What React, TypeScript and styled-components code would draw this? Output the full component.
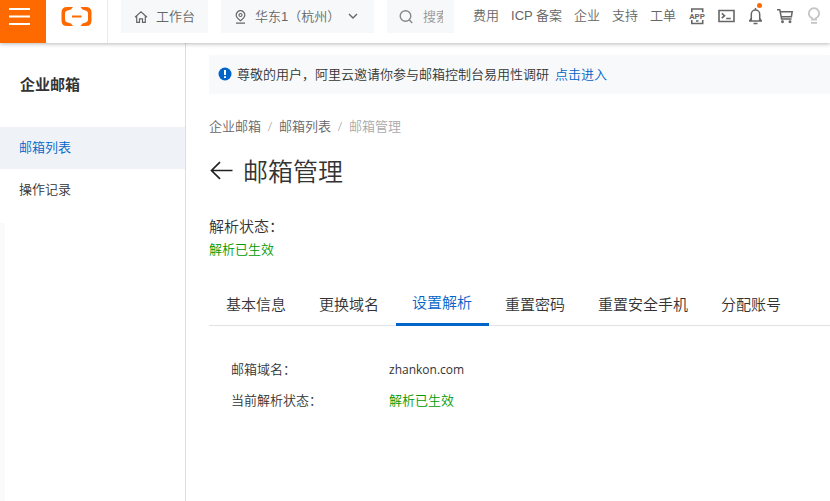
import React from "react";
import styled, { createGlobalStyle } from "styled-components";

const GlobalStyle = createGlobalStyle`
  * { box-sizing: border-box; }
  body {
    margin: 0;
    background: #fff;
    color: #333;
    font: 350 13px/20px "Open Sans", "Noto Sans CJK SC", sans-serif;
    overflow-x: hidden;
  }
  button, input { font: inherit; color: inherit; border: 0; background: none; padding: 0; }
  a { color: inherit; text-decoration: none; }
  h1, h2, p, ul, ol, dl, dd { margin: 0; padding: 0; list-style: none; }
`;

const Page = styled.div`
  display: flex;
  flex-direction: column;
  min-height: 100vh;
`;

const TopBar = styled.header`
  position: relative;
  z-index: 1;
  display: flex;
  height: 43px;
  background: #fff;
  box-shadow: 0 1px 4px rgba(0, 0, 0, 0.28);
  color: #666;
  font-family: "Liberation Sans", "Noto Sans CJK SC", sans-serif;
  white-space: nowrap;
`;

const MenuButton = styled.button`
  display: flex;
  justify-content: center;
  flex: none;
  width: 46px;
  padding: 7px 7px 0 0;
  background: #ff6a00;
`;

const LogoLink = styled.a`
  display: flex;
  justify-content: center;
  flex: none;
  width: 62px;
  padding-top: 6px;
  border-right: 1px solid #ebebeb;
`;

const Chip = styled.button<{ $width: number }>`
  display: flex;
  align-items: center;
  flex: none;
  gap: 8px;
  width: ${(p) => p.$width}px;
  height: 33px;
  margin-left: 13px;
  padding-left: 13px;
  background: #f7f8fa;
  svg { flex: none; }
`;

const Chevron = styled.span`
  display: flex;
`;

const SearchBox = styled.label`
  display: flex;
  align-items: center;
  flex: none;
  gap: 10px;
  width: 67px;
  height: 33px;
  margin-left: 13px;
  padding: 0 11px 0 12px;
  background: #f7f8fa;
  color: #888;
  svg { flex: none; }
`;

const SearchInput = styled.input`
  width: 100%;
  min-width: 0;
  outline: 0;
  &::placeholder { color: #999; opacity: 1; }
`;

const TopNav = styled.nav`
  display: flex;
  gap: 12px;
  height: 31px;
  align-items: center;
  margin-left: 19px;
`;

const Tools = styled.div`
  display: flex;
  align-items: center;
  gap: 12px;
  height: 31px;
  margin-left: 12px;
`;

const ToolButton = styled.button<{ $muted?: boolean }>`
  position: relative;
  display: flex;
  flex: none;
  color: ${(p) => (p.$muted ? "#c4c4c4" : "#666")};
`;

const Dot = styled.span`
  position: absolute;
  top: -4px;
  right: 2px;
  width: 5px;
  height: 5px;
  border-radius: 50%;
  background: #ff6a00;
`;

const Body = styled.div`
  display: flex;
  flex: 1;
`;

const Sidebar = styled.aside`
  flex: none;
  width: 186px;
  border-right: 1px solid #dedede;
  background: linear-gradient(#fafafa, #fafafa) 0 180px / 5px 100% no-repeat;
`;

const SidebarTitle = styled.h2`
  padding: 29px 20px 31px;
  font-size: 15px;
  line-height: 24px;
  font-weight: 700;
`;

const SideLink = styled.a<{ $active?: boolean }>`
  display: block;
  padding: 0 19px 2px;
  line-height: 40px;
  color: ${(p) => (p.$active ? "#0064c8" : "#333")};
  background: ${(p) => (p.$active ? "#eff3f8" : "transparent")};
`;

const Main = styled.main`
  flex: 1;
  min-width: 0;
  padding: 12px 0 24px 23px;
`;

const Notice = styled.div`
  display: flex;
  align-items: center;
  height: 39px;
  padding: 0 0 2px 9px;
  background: #f7f9fa;
  svg { margin-right: 5px; }
  a { margin-left: 6px; color: #0064c8; }
`;

const Crumbs = styled.ol`
  display: flex;
  margin-top: 22px;
  color: #666;
  li + li::before {
    content: "/";
    display: inline-block;
    width: 18px;
    text-align: center;
    color: #999;
  }
  li:last-child { color: #aaa; }
`;

const TitleRow = styled.div`
  display: flex;
  align-items: center;
  gap: 10px;
  margin-top: 17px;
`;

const BackButton = styled.button`
  display: flex;
  color: #222;
`;

const Title = styled.h1`
  font-size: 25px;
  line-height: 36px;
  font-weight: 350;
`;

const StatusLabel = styled.p`
  margin-top: 25px;
  font-size: 15px;
  line-height: 24px;
`;

const Success = styled.span`
  color: #009a00;
`;

const StatusValue = styled(Success)`
  display: block;
  margin-top: 1px;
`;

const TabList = styled.div`
  display: flex;
  margin-top: 24px;
  padding-left: 1px;
  border-bottom: 1px solid #dfe3e6;
`;

const Tab = styled.button<{ $active?: boolean }>`
  height: 43px;
  margin-bottom: -1px;
  padding: 0 17px 2px 16px;
  font-size: 15px;
  white-space: nowrap;
  color: ${(p) => (p.$active ? "#0064c8" : "#333")};
  border-bottom: ${(p) => (p.$active ? "3px solid #0064c8" : "0")};
`;

const Details = styled.dl`
  display: grid;
  grid-template-columns: 158px 1fr;
  row-gap: 11px;
  padding: 33px 22px 0;
`;

const Domain = styled.dd`
  font-size: 12px;
  line-height: 22px;
  height: 20px;
  font-weight: 400;
`;

const MenuIcon = () => (
  <svg width="21" height="19" viewBox="0 0 21 19" stroke="#fff" strokeWidth="2">
    <path d="M0 2h21M0 9.500h21M0 17h21" />
  </svg>
);

const CloudLogo = () => (
  <svg width="31" height="21" viewBox="0 0 31 21" fill="#ff6a00">
    <path d="M12 1H6Q.5 1 .5 6.500v8Q.5 20 6 20h6l-2-2.600-4.200-1.200Q4 15.600 4 13.800V7.200Q4 5.400 5.800 4.800L10 3.600z" />
    <path d="M19.500 1h5.500q5.500 0 5.500 5.500v8q0 5.500-5.500 5.500h-5.500l2-2.600 3.700-1.200q1.800-.6 1.800-2.400V7.200q0-1.800-1.800-2.400l-3.700-1.200z" />
    <path d="M11 9.500h9.500v2H11z" />
  </svg>
);

const stroke = { fill: "none", stroke: "currentColor", strokeWidth: 1.4 };

const HomeIcon = () => (
  <svg width="14" height="14" viewBox="0 0 14 14" {...stroke} strokeWidth={1.200}>
    <path d="M1 7.200 7 1.700l6 5.500M2.700 6v6.300h2.800V8.800h3v3.500h2.800V6" />
  </svg>
);

const PinIcon = () => (
  <svg width="13" height="14" viewBox="0 0 13 14" {...stroke} strokeWidth={1.200}>
    <path d="M6.500 10.800C3.500 8.500 2.200 7 2.200 5a4.300 4.300 0 0 1 8.600 0c0 2-1.300 3.500-4.300 5.800zM2 13.200h9" />
    <circle cx="6.500" cy="5" r="1.500" />
  </svg>
);

const ChevronIcon = () => (
  <svg width="10" height="7" viewBox="0 0 10 7" {...stroke}>
    <path d="m1 1 4 4 4-4" />
  </svg>
);

const SearchIcon = () => (
  <svg width="14" height="15" viewBox="0 0 14 15" {...stroke}>
    <circle cx="6.500" cy="7" r="5.300" />
    <path d="m10.200 10.800 3 3.200" />
  </svg>
);

const AppIcon = () => (
  <svg width="18" height="18" viewBox="0 0 18 18" {...stroke} strokeWidth={1.600}>
    <path d="M3.800 5.200V2h10.900v3.200M3.800 13v3.500h10.900V13M8 14h2.500" />
    <text x="9" y="12" textAnchor="middle" fontSize="8" fontWeight="700" fontFamily="Roboto, sans-serif" fill="currentColor" stroke="none">APP</text>
  </svg>
);

const TerminalIcon = () => (
  <svg width="17" height="14" viewBox="0 0 17 14" {...stroke} strokeWidth={1.600}>
    <path d="M1 1.500h15v11H1zM3.800 4.300 6.500 6.700 3.800 9.200M8.200 9.500h4.500" />
  </svg>
);

const BellIcon = () => (
  <svg width="17" height="18" viewBox="0 0 17 18" {...stroke} strokeWidth={1.500}>
    <path d="M8.500 1v2M2 14h13M4.300 13.500V7.300a4.200 4.200 0 0 1 8.400 0v6.200M4.300 11 2.800 13.800M12.700 11l1.500 2.800M6.500 16.500h4" />
  </svg>
);

const CartIcon = () => (
  <svg width="18" height="16" viewBox="0 0 18 16" {...stroke} strokeWidth={1.500}>
    <path d="M1 1.700h2.800l1.800 9.300h10M4.200 3.700h12l-.8 5H5.200" />
    <circle cx="6.500" cy="13.700" r=".7" fill="currentColor" />
    <circle cx="14" cy="13.700" r=".7" fill="currentColor" />
  </svg>
);

const BulbIcon = () => (
  <svg width="16" height="18" viewBox="0 0 16 18" {...stroke} strokeWidth={1.800}>
    <path d="M6 12.500v-1.300a5.200 5.200 0 1 1 4 0v1.300zM5 15.800h6" />
  </svg>
);

const InfoIcon = () => (
  <svg width="14" height="14" viewBox="0 0 14 14">
    <circle cx="7" cy="7" r="6.500" fill="#0064c8" />
    <path d="M7 3v5M7 9.300v1.700" stroke="#fff" strokeWidth="2" />
  </svg>
);

const BackIcon = () => (
  <svg width="24" height="20" viewBox="0 0 24 20" {...stroke} strokeWidth={1.700}>
    <path d="M23.500 9.500H2.500M11 1.200 2.500 9.500l8.500 8.300" />
  </svg>
);

const navItems = ["费用", "ICP 备案", "企业", "支持", "工单"];
const tabs = ["基本信息", "更换域名", "设置解析", "重置密码", "重置安全手机", "分配账号"];

export default function App() {
  return (
    <Page>
      <GlobalStyle />
      <TopBar>
        <MenuButton aria-label="菜单"><MenuIcon /></MenuButton>
        <LogoLink href="#" aria-label="阿里云"><CloudLogo /></LogoLink>
        <Chip $width={87}><HomeIcon />工作台</Chip>
        <Chip $width={153}>
          <PinIcon />华东1（杭州）
          <Chevron><ChevronIcon /></Chevron>
        </Chip>
        <SearchBox>
          <SearchIcon />
          <SearchInput type="text" placeholder="搜索" aria-label="搜索" />
        </SearchBox>
        <TopNav>
          {navItems.map((item) => <a href="#" key={item}>{item}</a>)}
        </TopNav>
        <Tools>
          <ToolButton aria-label="APP"><AppIcon /></ToolButton>
          <ToolButton aria-label="命令行"><TerminalIcon /></ToolButton>
          <ToolButton aria-label="消息"><BellIcon /><Dot /></ToolButton>
          <ToolButton aria-label="购物车"><CartIcon /></ToolButton>
          <ToolButton aria-label="帮助" $muted><BulbIcon /></ToolButton>
        </Tools>
      </TopBar>
      <Body>
        <Sidebar>
          <SidebarTitle>企业邮箱</SidebarTitle>
          <nav>
            <SideLink href="#" $active>邮箱列表</SideLink>
            <SideLink href="#">操作记录</SideLink>
          </nav>
        </Sidebar>
        <Main>
          <Notice>
            <InfoIcon />
            <span>尊敬的用户，阿里云邀请你参与邮箱控制台易用性调研</span>
            <a href="#">点击进入</a>
          </Notice>
          <Crumbs>
            <li><a href="#">企业邮箱</a></li>
            <li><a href="#">邮箱列表</a></li>
            <li>邮箱管理</li>
          </Crumbs>
          <TitleRow>
            <BackButton aria-label="返回"><BackIcon /></BackButton>
            <Title>邮箱管理</Title>
          </TitleRow>
          <StatusLabel>解析状态：</StatusLabel>
          <StatusValue>解析已生效</StatusValue>
          <TabList role="tablist">
            {tabs.map((tab, i) => (
              <Tab key={tab} role="tab" aria-selected={i === 2} $active={i === 2}>{tab}</Tab>
            ))}
          </TabList>
          <Details>
            <dt>邮箱域名：</dt>
            <Domain>zhankon.com</Domain>
            <dt>当前解析状态：</dt>
            <dd><Success>解析已生效</Success></dd>
          </Details>
        </Main>
      </Body>
    </Page>
  );
}
